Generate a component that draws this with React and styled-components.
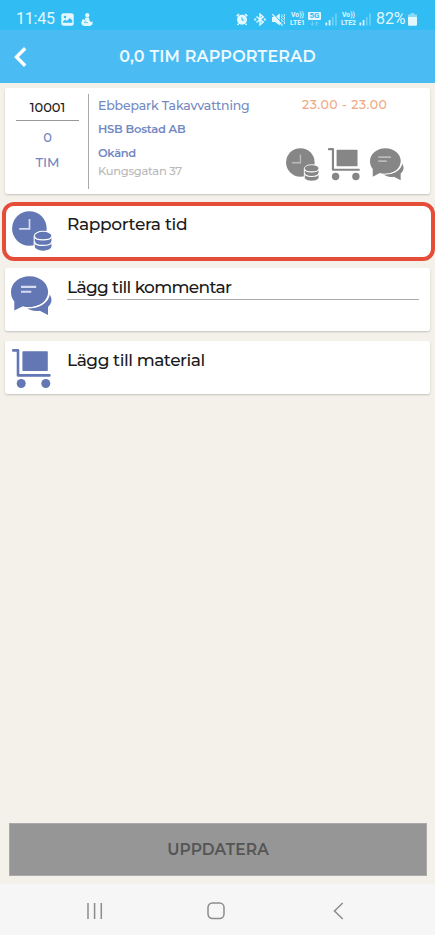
import React from 'react';
import styled, { createGlobalStyle } from 'styled-components';

const GlobalStyle = createGlobalStyle`
  * {
    box-sizing: border-box;
  }

  body {
    margin: 0;
    background-color: #f4f1ea;
    font-family: Montserrat, Inter, 'Open Sans', sans-serif;
  }

  svg {
    display: block;
    flex-shrink: 0;
  }
`;

const Screen = styled.div`
  display: flex;
  flex-direction: column;
  width: 435px;
  height: 935px;
  overflow: hidden;
`;

const StatusBar = styled.div`
  display: flex;
  align-items: center;
  height: 30px;
  padding: 8px 18px 0 16px;
  background-color: #31bcf3;
  color: #e2f7fe;
  font-family: Roboto, sans-serif;
  font-size: 16px;
  line-height: 22px;
`;

const StatusText = styled.span`
  width: ${(props) => props.$width}px;
  white-space: nowrap;
  letter-spacing: ${(props) => props.$spacing || 0}px;
`;

const StatusIcons = styled.div`
  display: flex;
  align-items: center;
  margin-left: ${(props) => props.$left || 'auto'};
  gap: ${(props) => props.$gap}px;
`;

const Volte = styled.span`
  display: flex;
  flex-direction: column;
  width: 17px;
  font-size: 6.8px;
  font-weight: 700;
  line-height: 8px;
  text-align: center;
  white-space: nowrap;
`;

const Header = styled.header`
  display: grid;
  grid-template-columns: 42px 1fr 42px;
  align-items: center;
  height: 53px;
  padding-left: 14px;
  background-color: #4bbcf3;
  color: #eefaff;
`;

const BackButton = styled.button`
  padding: 0;
  border: none;
  background: none;
  color: white;
`;

const Title = styled.h1`
  margin: 1px 14px 0 0;
  font-size: 16px;
  font-weight: 600;
  line-height: 20px;
  letter-spacing: 0.2px;
  text-align: center;
  white-space: nowrap;
`;

const Content = styled.main`
  display: flex;
  flex: 1;
  flex-direction: column;
  gap: 10px;
  padding: 5px 5px 0;
`;

const Card = styled.section`
  display: flex;
  height: ${(props) => props.$height}px;
  background-color: white;
  border-radius: 2px;
  box-shadow: 0 1px 2px rgba(0, 0, 0, 0.2);
`;

const Hours = styled.div`
  display: flex;
  flex-direction: column;
  align-items: center;
  width: 84px;
  height: 95px;
  margin-top: 6px;
  padding: 3px 9px 0 11px;
  border-right: 1px solid #a9a9a9;
  color: #6f87c0;
  font-size: 13px;
  font-weight: 500;
  line-height: 25px;
`;

const OrderNumber = styled.div`
  width: 100%;
  height: 24px;
  margin-bottom: 4px;
  border-bottom: 1px solid #999;
  color: #1c1c1c;
  line-height: 20px;
  text-align: center;
`;

const Details = styled.div`
  display: flex;
  flex-direction: column;
  width: 193px;
  padding: 5px 0 0 9px;
`;

const Detail = styled.div`
  height: ${(props) => props.$height}px;
  color: ${(props) => props.$color || '#7389c2'};
  font-size: ${(props) => props.$size || 11.5}px;
  font-weight: ${(props) => props.$weight || 600};
  line-height: 25px;
  letter-spacing: ${(props) => props.$spacing || 0}px;
  white-space: nowrap;
`;

const Summary = styled.div`
  display: flex;
  flex-direction: column;
  justify-content: space-between;
  padding: 8px 0 12px 4px;
  color: #868686;
`;

const Time = styled.div`
  padding-left: 16px;
  color: #efab87;
  font-size: 12.5px;
  font-weight: 500;
  line-height: 18px;
  letter-spacing: 0.5px;
  white-space: nowrap;
`;

const SummaryIcons = styled.div`
  display: flex;
  gap: 9px;
`;

const Highlight = styled.div`
  height: 59px;
  margin: -2px -5px -3px -3px;
  background-color: white;
  border: 4px solid #e54d39;
  border-radius: 12px;
`;

const Action = styled.div`
  display: flex;
  flex: 1;
  gap: 15px;
  padding: ${(props) => props.$padding};
  color: #6277b3;
`;

const Label = styled.div`
  flex: 1;
  height: 24px;
  margin-top: ${(props) => props.$top || 0}px;
  color: #1b1b1b;
  font-size: 17px;
  font-weight: 500;
  line-height: 22px;
  letter-spacing: ${(props) => props.$spacing || 0}px;
  border-bottom: 1px solid ${(props) => (props.$underline ? '#aaa' : 'transparent')};
`;

const Footer = styled.footer`
  padding: 0 8px 8px 9px;
`;

const UpdateButton = styled.button`
  display: block;
  width: 100%;
  height: 53px;
  padding: 0;
  background-color: #969696;
  border: 1px solid #aaa;
  color: #555;
  font-family: inherit;
  font-size: 15.5px;
  font-weight: 600;
  letter-spacing: 0.1px;
`;

const NavBar = styled.nav`
  display: flex;
  align-items: center;
  justify-content: space-between;
  height: 51px;
  padding: 2px 88px 0 86px;
  background-color: #f6f6f6;
  color: #8c8c8c;
`;

const NetworkBox = styled.div`
  display: flex;
  flex-direction: column;
  align-items: center;
  gap: 1px;
  width: 13px;
  margin-left: -2px;
`;

const NetworkLabel = styled.span`
  width: 13px;
  height: 8px;
  border-radius: 1px;
  background-color: currentColor;
  font-size: 8px;
  font-weight: 700;
  line-height: 8.5px;
  text-align: center;

  span {
    color: #31bcf3;
  }
`;

const TimeIcon = ({ size, line = '#d5dcf0' }) => (
  <svg width={size} height={size} viewBox="0 0 40 40" fill="currentColor">
    <circle cx="17.4" cy="17.5" r="17.3" />
    <path d="M17.5 8v9.8H7.2" fill="none" stroke={line} strokeWidth="1.7" />
    <path
      d="M22.2 25c0-2.7 4-4.7 8.9-4.7s8.9 2 8.9 4.7v10.5c0 2.7-4 4.7-8.9 4.7s-8.9-2-8.9-4.7z"
      stroke="white"
      strokeWidth="1.1"
    />
    <path
      d="M22.5 25c0 5.2 17.2 5.2 17.2 0M22.5 30.4c0 5.4 17.2 5.4 17.2 0"
      fill="none"
      stroke="white"
      strokeWidth="1.3"
    />
  </svg>
);

const CartIcon = ({ size }) => (
  <svg width={size} height={size} viewBox="0 0 40 40" fill="currentColor">
    <path
      d="M1.2 1.4h4.8v25h31.4"
      fill="none"
      stroke="currentColor"
      strokeWidth="2.6"
      strokeLinecap="round"
      strokeLinejoin="round"
    />
    <rect x="10.4" y="2.2" width="25.4" height="19.8" rx="0.8" />
    <circle cx="9.2" cy="34.5" r="4.5" />
    <circle cx="33.8" cy="34.5" r="4.5" />
  </svg>
);

const CommentIcon = ({ size, line = '#d5dcf0' }) => (
  <svg width={size} height={size} viewBox="0 0 41 41" fill="currentColor">
    <path d="M38.2 18c3.4 4.3 3 9-1.2 12.9V39l-8.2-4.2c-5.5.8-10.5-.5-13.6-3.6 11.2 1 21.2-4 23-13.2z" />
    <path d="M18.6.2C8.3.2 0 7 0 15.8c0 4.3 1.2 7.2 3.3 9.5v9.3l8.6-4.4c2 .8 4.3 1.1 6.7 1.1 10.3 0 18.5-6.8 18.5-15.5S28.9.2 18.6.2z" />
    <path d="M14 31.6c12.5.9 23.3-4.5 24.2-13.6" fill="none" stroke="white" strokeWidth="1.4" />
    <path d="M10 10.9h15.2M10 15.8h10.3" fill="none" stroke={line} strokeWidth="2.1" />
  </svg>
);

const SignalIcon = ({ bars }) => (
  <svg width="13" height="13" viewBox="0 0 13 13" fill="currentColor">
    {[3, 5.5, 8.5, 12].map((height, i) => (
      <rect
        key={height}
        x={i * 3.2 + 0.5}
        y={12.5 - height}
        width="1.7"
        height={height}
        opacity={i < bars ? 1 : 0.35}
      />
    ))}
  </svg>
);

const PictureIcon = () => (
  <svg width="13" height="13" viewBox="0 0 13 13">
    <rect x="0.3" y="0.3" width="12.4" height="12.4" rx="2" fill="currentColor" />
    <circle cx="4" cy="4" r="1.2" fill="#31bcf3" />
    <path d="M2 8.5l2.3-2 1.6 1.5 3-3 2.4 2.5v2.2H2z" fill="#31bcf3" />
  </svg>
);

const FigureIcon = () => (
  <svg width="12" height="13" viewBox="0 0 12 13" fill="currentColor">
    <circle cx="6.3" cy="2.2" r="2.1" />
    <path d="M4.4 4.6h3.6l.4 2.6 1.4 1.8 2-.4-.5 3-2.2 1.3H3.1C1 12.6 0 10.8.4 8.9L1.7 6l2.1 1z" />
    <path d="M4.8 7.4L3.3 9.6H7" fill="none" stroke="#31bcf3" strokeWidth="0.7" />
  </svg>
);

const AlarmIcon = () => (
  <svg width="12" height="13" viewBox="0 0 12 13">
    <path
      d="M.7 3.2L3 1.1M11.3 3.2L9 1.1M2.5 10.8l-1 1.3M9.5 10.8l1 1.3"
      stroke="currentColor"
      strokeWidth="1.6"
    />
    <circle cx="6" cy="6.8" r="5" fill="currentColor" />
    <path d="M6 4.2v2.9h2.3" fill="none" stroke="#31bcf3" strokeWidth="1" />
  </svg>
);

const BluetoothIcon = () => (
  <svg width="12" height="13" viewBox="0 0 12 13" fill="none" stroke="currentColor" strokeWidth="1.5">
    <path d="M2.5 3.5l6.7 5.6L6 11.9V1.1l3.2 2.8-6.7 5.6" />
    <path d="M.2 6.5h2M9.8 6.5h2" strokeWidth="1.8" />
  </svg>
);

const MuteIcon = () => (
  <svg width="13" height="13" viewBox="0 0 13 13">
    <path d="M0 4h3L7.8.6v11.8L3 9H0z" fill="currentColor" />
    <path
      d="M9.4 1.5l1 1.3-1 1.3 1 1.4-1 1.3 1 1.3-1 1.4 1 1.3M11.8 1l1 1.3-1 1.3 1 1.3-1 1.3 1 1.3-1 1.3 1 1.3-1 1.3"
      fill="none"
      stroke="currentColor"
      strokeWidth="1"
    />
    <path d="M1.4.6L11.6 12" stroke="#31bcf3" strokeWidth="1" />
    <path d="M.4 1.2l10.2 11.4" stroke="currentColor" strokeWidth="1.2" />
  </svg>
);

const BatteryIcon = () => (
  <svg width="9" height="13" viewBox="0 0 9 13" fill="currentColor">
    <path d="M2.7 0h3.6v1.5H9v3H0v-3h2.7z" opacity="0.5" />
    <path d="M0 4h9v7.2c0 1-.6 1.6-1.6 1.6H1.6C.6 12.8 0 12.2 0 11.2z" />
  </svg>
);

const App = () => {
  return (
    <Screen>
      <GlobalStyle />
      <StatusBar>
        <StatusText $width={40} $spacing={-0.2}>11:45</StatusText>
        <StatusIcons $left="5px" $gap={7}>
          <PictureIcon />
          <FigureIcon />
        </StatusIcons>
        <StatusIcons $gap={4}>
          <StatusIcons $gap={6}>
            <AlarmIcon />
            <BluetoothIcon />
            <MuteIcon />
          </StatusIcons>
          <Volte>
            <span>Vo))</span>
            <span>LTE1</span>
          </Volte>
          <NetworkBox>
            <NetworkLabel><span>5G</span></NetworkLabel>
            <svg width="9" height="5" viewBox="0 0 9 5" fill="none" stroke="currentColor" strokeWidth="0.8" opacity="0.5">
              <path d="M2.3 0v4M.6 2.5l1.7 1.7L4 2.5M6.7 5V1M5 2.5L6.7.8l1.7 1.7" />
            </svg>
          </NetworkBox>
          <StatusIcons $left="0" $gap={2}>
            <SignalIcon bars={2} />
            <Volte>
              <span>Vo))</span>
              <span>LTE2</span>
            </Volte>
            <SignalIcon bars={2} />
          </StatusIcons>
          <StatusIcons $left="0" $gap={1}>
            <StatusText $width={31} $spacing={-0.1}>82%</StatusText>
            <BatteryIcon />
          </StatusIcons>
        </StatusIcons>
      </StatusBar>

      <Header>
        <BackButton aria-label="Tillbaka">
          <svg width="13" height="20" viewBox="0 0 13 20" fill="none" stroke="currentColor" strokeWidth="3.4">
            <path d="M11.2 1.3L2.5 10l8.7 8.7" />
          </svg>
        </BackButton>
        <Title>0,0 TIM RAPPORTERAD</Title>
      </Header>

      <Content>
        <Card $height={106}>
          <Hours>
            <OrderNumber>10001</OrderNumber>
            <div>0</div>
            <div>TIM</div>
          </Hours>
          <Details>
            <Detail $height={24} $size={12.5} $spacing={-0.15} $weight={500}>Ebbepark Takavvattning</Detail>
            <Detail $height={24} $spacing={-0.25}>HSB Bostad AB</Detail>
            <Detail $height={18} $spacing={-0.35}>Okänd</Detail>
            <Detail $height={20} $color="#b9b9b9" $spacing={-0.3} $weight={500}>Kungsgatan 37</Detail>
          </Details>
          <Summary>
            <Time>23.00 - 23.00</Time>
            <SummaryIcons>
              <TimeIcon size={33} line="#bbb" />
              <CartIcon size={33} />
              <CommentIcon size={34} line="#bbb" />
            </SummaryIcons>
          </Summary>
        </Card>

        <Highlight>
          <Action $padding="5px 11px 0 6px">
            <TimeIcon size={40} />
            <Label $top={2} $spacing={-0.35}>Rapportera tid</Label>
          </Action>
        </Highlight>

        <Card $height={63}>
          <Action $padding="8px 11px 0 6px">
            <CommentIcon size={41} />
            <Label $underline $spacing={-0.65}>Lägg till kommentar</Label>
          </Action>
        </Card>

        <Card $height={53}>
          <Action $padding="8px 11px 0 7px">
            <CartIcon size={40} />
            <Label $spacing={-0.45}>Lägg till material</Label>
          </Action>
        </Card>
      </Content>

      <Footer>
        <UpdateButton>UPPDATERA</UpdateButton>
      </Footer>

      <NavBar>
        <svg width="17" height="18" viewBox="0 0 17 18" stroke="currentColor" strokeWidth="1.5">
          <path d="M2 1v16M8.6 1v16M15.3 1v16" />
        </svg>
        <svg width="18" height="18" viewBox="0 0 18 18" fill="none" stroke="currentColor" strokeWidth="1.5">
          <rect x="1" y="1" width="16" height="15.5" rx="4.5" />
        </svg>
        <svg width="18" height="18" viewBox="0 0 18 18" fill="none" stroke="currentColor" strokeWidth="1.5">
          <path d="M13.7 1L5.5 9l8.2 8" />
        </svg>
      </NavBar>
    </Screen>
  );
};

export default App;
